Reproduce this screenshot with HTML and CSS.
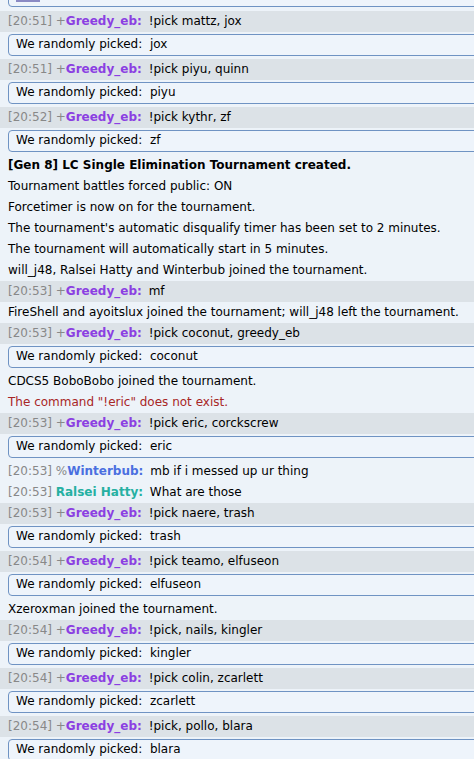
FILE: index.html
```html
<!DOCTYPE html>
<html lang="en">
<head>
    <meta charset="UTF-8">
    <meta name="viewport" content="width=device-width, initial-scale=1.0">
    <title>Tournaments chat</title>
    <link rel="stylesheet" href="styles.css">
</head>
<body>

<div class="chat-log">
    <!-- cut off by the scroll position -->
    <div class="infobox infobox-top"><span class="swatch"></span> Pi</div>

    <div class="chat mine"><small>[20:51] </small><strong><small>+</small><span class="u-greedy">Greedy_eb:</span></strong> <em>!pick mattz, jox</em></div>
    <div class="infobox">We randomly picked: &nbsp;jox</div>
    <div class="chat mine"><small>[20:51] </small><strong><small>+</small><span class="u-greedy">Greedy_eb:</span></strong> <em>!pick piyu, quinn</em></div>
    <div class="infobox">We randomly picked: &nbsp;piyu</div>
    <div class="chat mine"><small>[20:52] </small><strong><small>+</small><span class="u-greedy">Greedy_eb:</span></strong> <em>!pick kythr, zf</em></div>
    <div class="infobox">We randomly picked: &nbsp;zf</div>

    <div class="notice"><strong>[Gen 8] LC Single Elimination Tournament created.</strong></div>
    <div class="notice">Tournament battles forced public: ON</div>
    <div class="notice">Forcetimer is now on for the tournament.</div>
    <div class="notice">The tournament's automatic disqualify timer has been set to 2 minutes.</div>
    <div class="notice">The tournament will automatically start in 5 minutes.</div>
    <div class="notice">will_j48, Ralsei Hatty and Winterbub joined the tournament.</div>

    <div class="chat mine"><small>[20:53] </small><strong><small>+</small><span class="u-greedy">Greedy_eb:</span></strong> <em>mf</em></div>
    <div class="notice">FireShell and ayoitslux joined the tournament; will_j48 left the tournament.</div>
    <div class="chat mine"><small>[20:53] </small><strong><small>+</small><span class="u-greedy">Greedy_eb:</span></strong> <em>!pick coconut, greedy_eb</em></div>
    <div class="infobox">We randomly picked: &nbsp;coconut</div>
    <div class="notice">CDCS5 BoboBobo joined the tournament.</div>
    <div class="notice error">The command "!eric" does not exist.</div>
    <div class="chat mine"><small>[20:53] </small><strong><small>+</small><span class="u-greedy">Greedy_eb:</span></strong> <em>!pick eric, corckscrew</em></div>
    <div class="infobox">We randomly picked: &nbsp;eric</div>
    <div class="chat"><small>[20:53] </small><strong><small>%</small><span class="u-winter">Winterbub:</span></strong> <em>mb if i messed up ur thing</em></div>
    <div class="chat"><small>[20:53] </small><strong><span class="u-ralsei">Ralsei Hatty:</span></strong> <em>What are those</em></div>
    <div class="chat mine"><small>[20:53] </small><strong><small>+</small><span class="u-greedy">Greedy_eb:</span></strong> <em>!pick naere, trash</em></div>
    <div class="infobox">We randomly picked: &nbsp;trash</div>
    <div class="chat mine"><small>[20:54] </small><strong><small>+</small><span class="u-greedy">Greedy_eb:</span></strong> <em>!pick teamo, elfuseon</em></div>
    <div class="infobox">We randomly picked: &nbsp;elfuseon</div>
    <div class="notice">Xzeroxman joined the tournament.</div>
    <div class="chat mine"><small>[20:54] </small><strong><small>+</small><span class="u-greedy">Greedy_eb:</span></strong> <em>!pick, nails, kingler</em></div>
    <div class="infobox">We randomly picked: &nbsp;kingler</div>
    <div class="chat mine"><small>[20:54] </small><strong><small>+</small><span class="u-greedy">Greedy_eb:</span></strong> <em>!pick colin, zcarlett</em></div>
    <div class="infobox">We randomly picked: &nbsp;zcarlett</div>
    <div class="chat mine"><small>[20:54] </small><strong><small>+</small><span class="u-greedy">Greedy_eb:</span></strong> <em>!pick, pollo, blara</em></div>
    <div class="infobox">We randomly picked: &nbsp;blara</div>
</div>

</body>
</html>
```

FILE: styles.css
```css
body {
    margin: 0;
    background-color: #edf3f9;
    font-family: "DejaVu Sans", Verdana, sans-serif;
    font-size: 12px;
    color: #000;
    overflow: hidden;
}
.chat-log {
    margin-top: -17px;
}
.chat, .notice {
    padding: 3px 8px;
    line-height: 15px;
    white-space: nowrap;
}
.chat small {
    font-size: 12px;
    color: #888;
    font-weight: normal;
}
.chat strong {
    margin-right: 3px;
}
.chat em {
    font-style: normal;
}
/* highlighted rows */
.mine {
    background-color: #dce2e7;
}
.u-greedy {
    color: #8b3fe2;
}
.u-winter {
    color: #4a6fe0;
}
.u-ralsei {
    color: #26b0a2;
}
.error {
    color: #a82626;
}
.infobox {
    margin: 2px -10px 3px 8px;
    padding: 2px 7px 3px;
    line-height: 15px;
    border: 1px solid #6f93c3;
    border-radius: 4px;
    background-color: #eef4fb;
    white-space: nowrap;
}
.infobox-top {
    margin-bottom: 4px;
}
.swatch {
    display: inline-block;
    width: 24px;
    height: 12px;
    background-color: #8a8ac4;
    vertical-align: middle;
}
```
